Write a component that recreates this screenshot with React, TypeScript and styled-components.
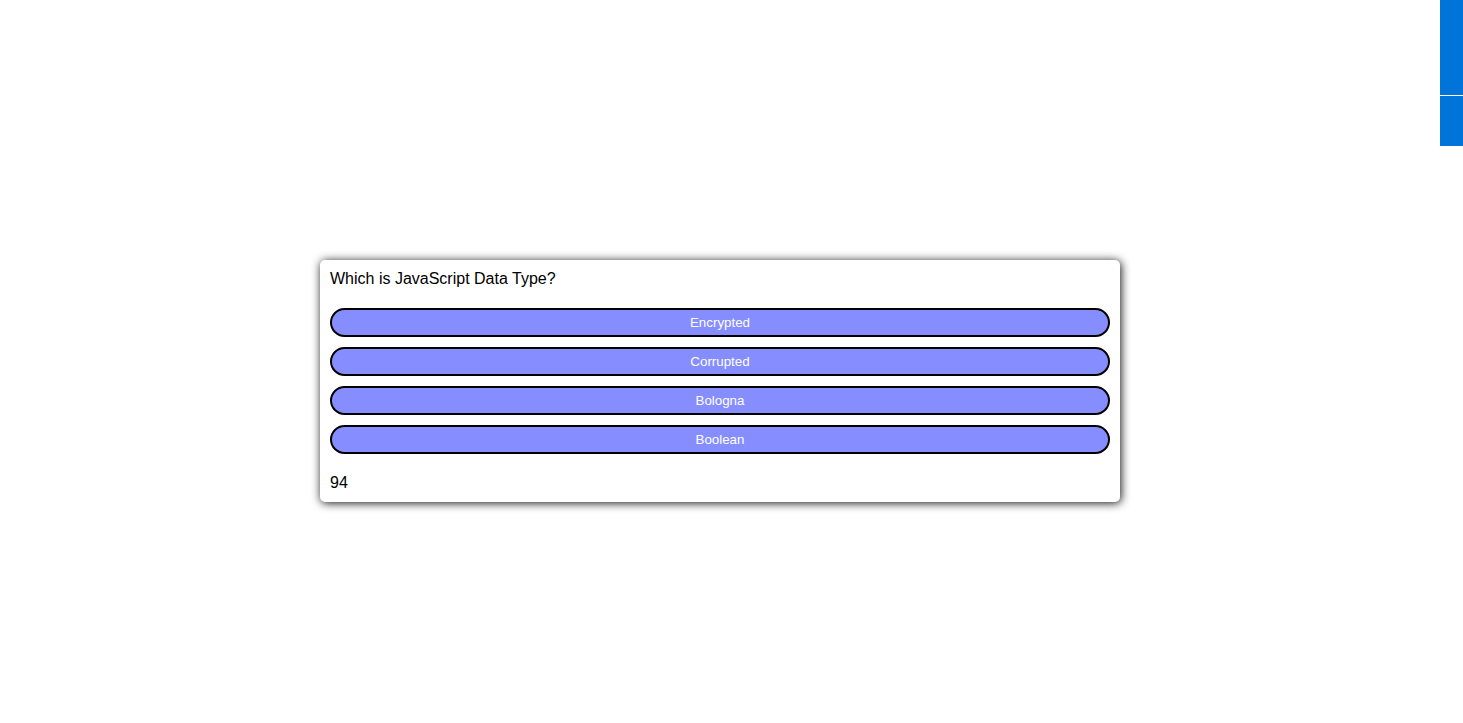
import React from "react";
import styled, { createGlobalStyle } from "styled-components";

const Global = createGlobalStyle`
  html, body { margin: 0; padding: 0; background: #fff; }
  body { font-family: "Liberation Sans", Arial, sans-serif; }
`;

const Page = styled.div`
  display: flex;
  width: 100%;
  min-height: 723px;
`;

const Main = styled.main`
  flex: 1;
  display: flex;
  justify-content: center;
  align-items: flex-start;
  padding-top: 260px;
`;

const Card = styled.section`
  width: 800px;
  box-sizing: border-box;
  padding: 10px 10px 10px;
  background: #fff;
  border-radius: 5px;
  box-shadow: 1px 1px 10px rgba(0, 0, 0, 0.95);
`;

const Question = styled.div`
  font-size: 16px;
  line-height: 18px;
  color: #000;
`;

const Options = styled.div`
  display: flex;
  flex-direction: column;
  gap: 10px;
  margin-top: 20px;
`;

const OptionButton = styled.button`
  height: 29px;
  width: 100%;
  box-sizing: border-box;
  border: 2px solid #000;
  border-radius: 15px;
  background: #868dff;
  color: #fff;
  font-family: "Liberation Sans", Arial, sans-serif;
  font-size: 13.33px;
  padding: 0;
  cursor: pointer;
`;

const Score = styled.div`
  margin-top: 20px;
  font-size: 16px;
  line-height: 18px;
  color: #000;
`;

const SideBar = styled.aside`
  width: 23px;
  display: flex;
  flex-direction: column;
  gap: 1px;
`;

const SideBlock = styled.div<{ $h: number }>`
  height: ${(p) => p.$h}px;
  background: #0074d9;
`;

const options = ["Encrypted", "Corrupted", "Bologna", "Boolean"];

export default function App() {
  return (
    <>
      <Global />
      <Page>
        <Main>
          <Card>
            <Question>Which is JavaScript Data Type?</Question>
            <Options>
              {options.map((o) => (
                <OptionButton key={o}>{o}</OptionButton>
              ))}
            </Options>
            <Score>94</Score>
          </Card>
        </Main>
        <SideBar>
          <SideBlock $h={95} />
          <SideBlock $h={50} />
        </SideBar>
      </Page>
    </>
  );
}
